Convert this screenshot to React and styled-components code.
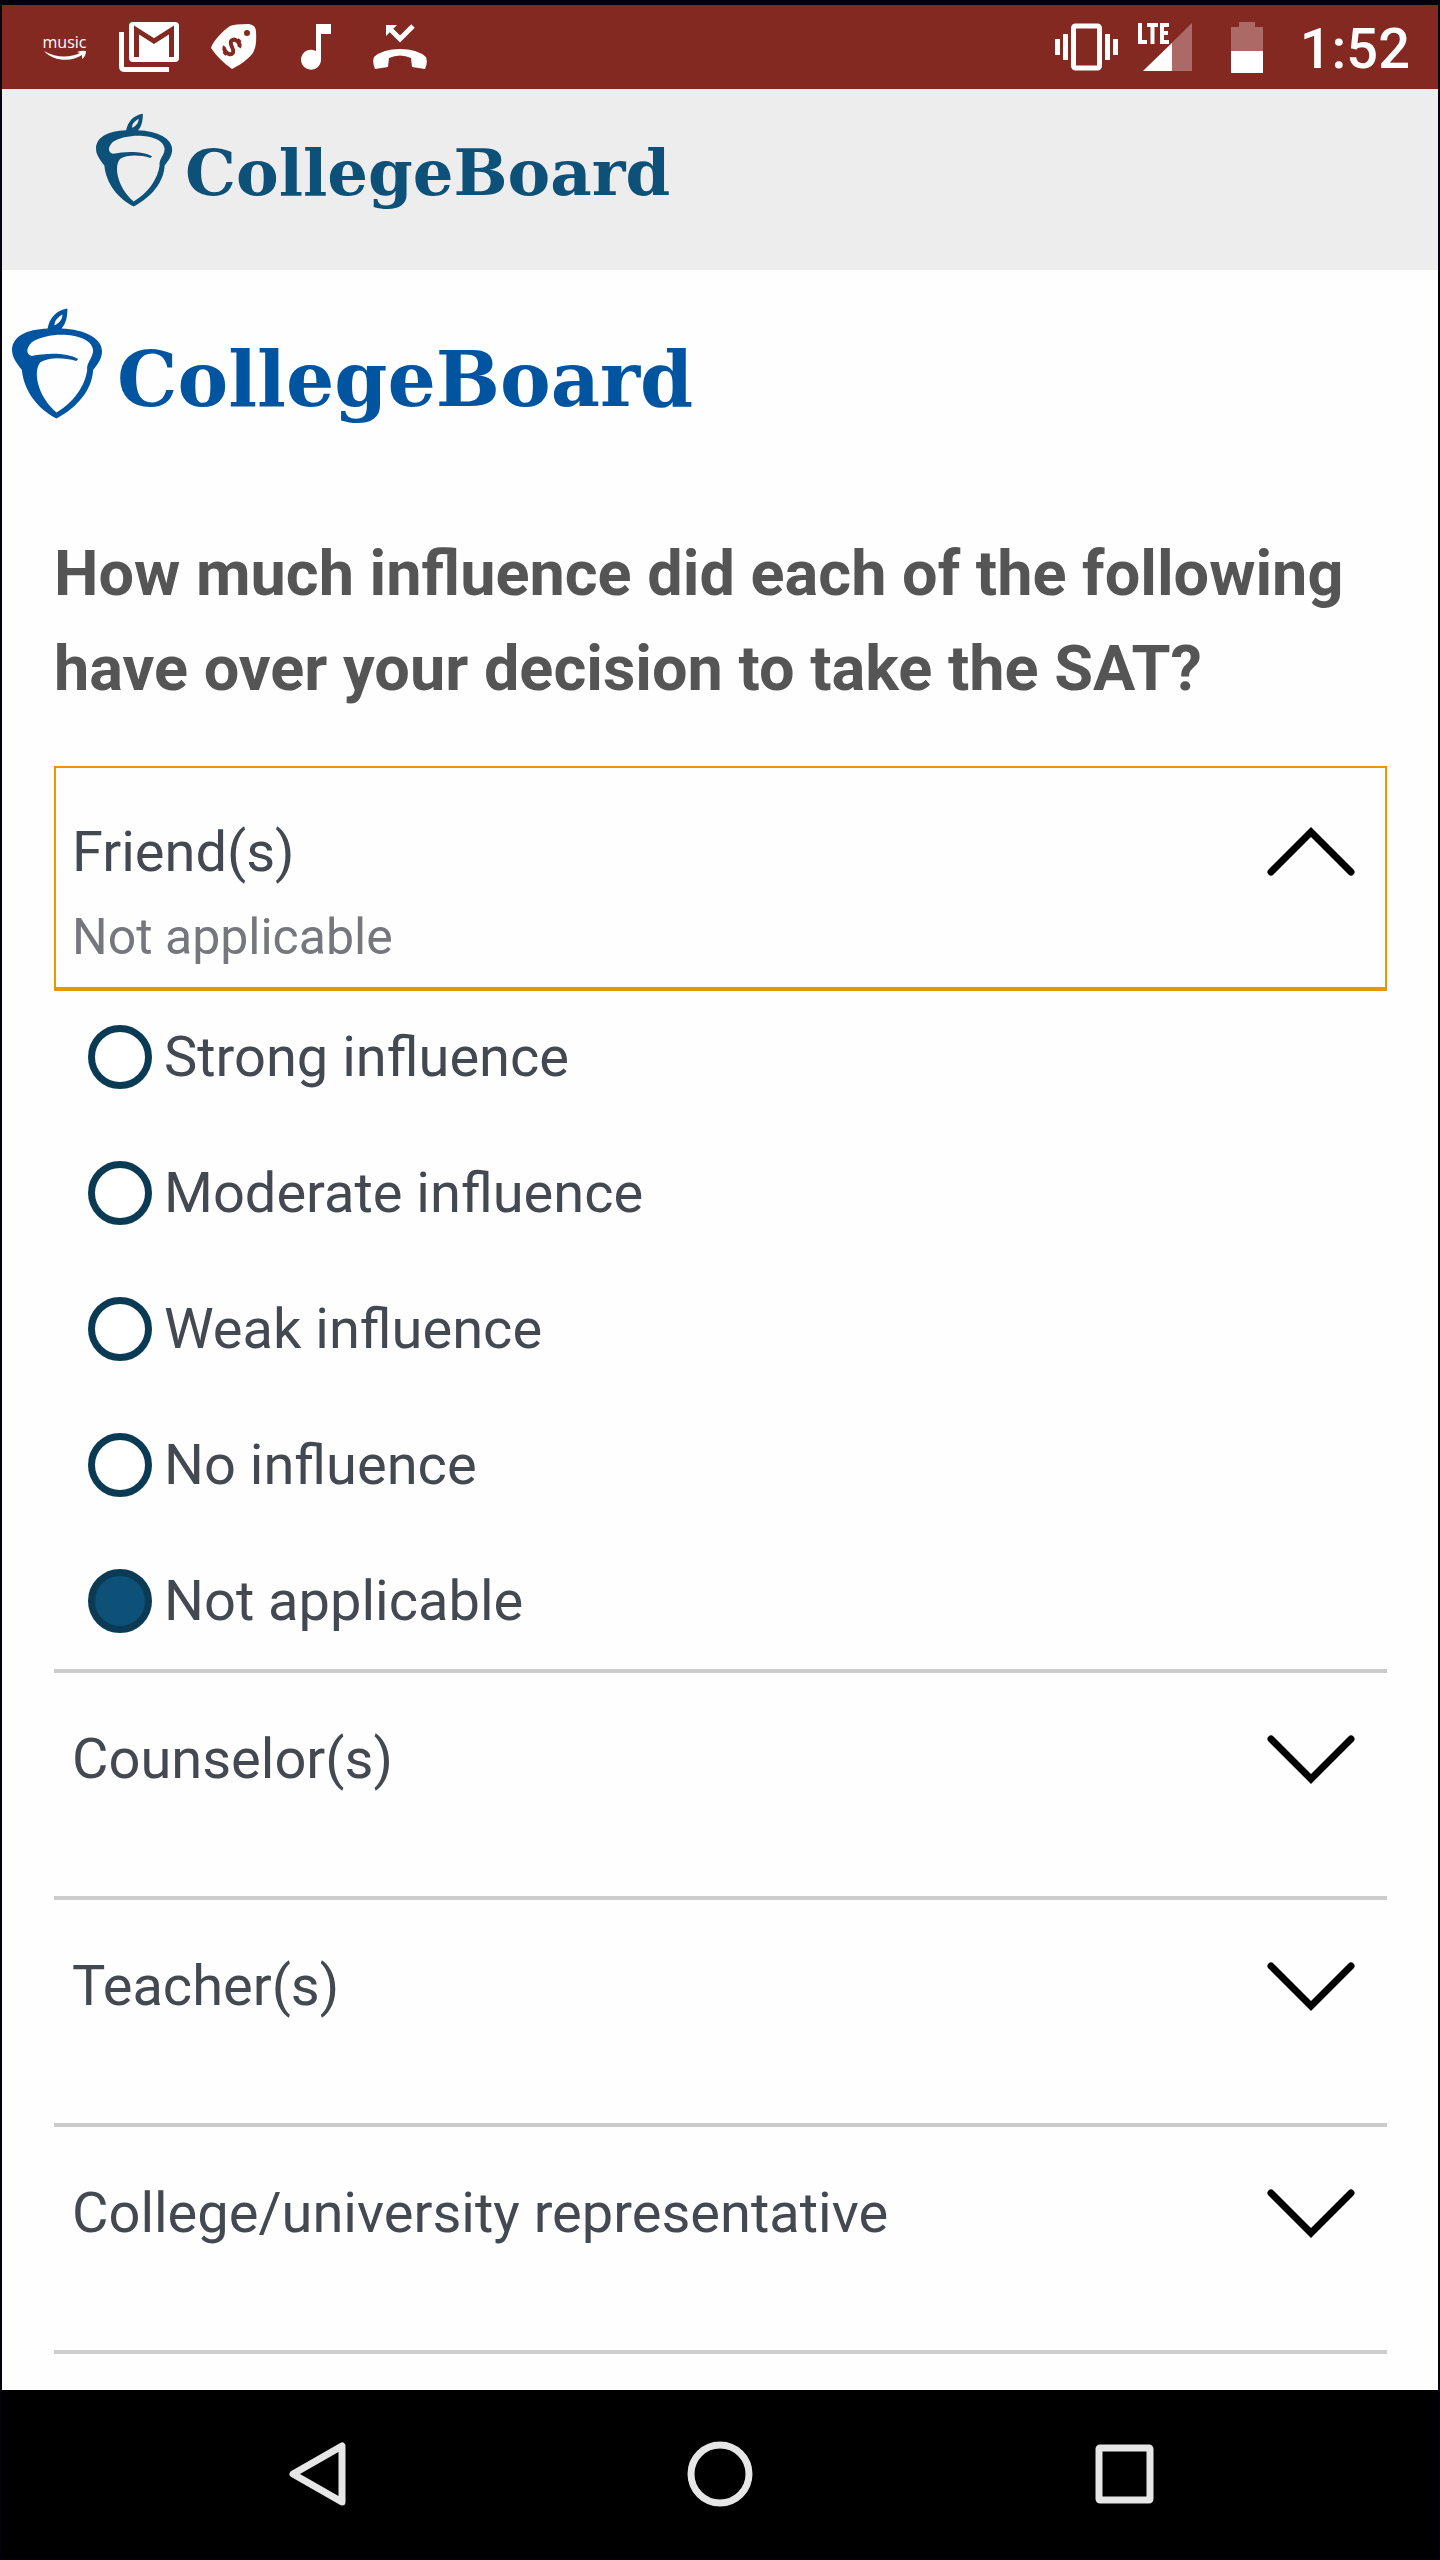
import React, { useState } from "react";
import styled, { createGlobalStyle } from "styled-components";

const GlobalStyle = createGlobalStyle`
  * { box-sizing: border-box; }
  body { margin: 0; background: #05000c; font-family: Roboto, "Liberation Sans", sans-serif; }
  button { font: inherit; color: inherit; background: none; border: 0; padding: 0; cursor: pointer; }
`;

const Screen = styled.div`
  display: flex;
  flex-direction: column;
  min-height: 100vh;
  padding: 5px 2px 2px;
  background: #05000c;
`;

const StatusBar = styled.header`
  display: flex;
  justify-content: space-between;
  height: 84px;
  padding: 0 28px 0 40px;
  background: #832922;
  color: #fff;
`;

const StatusGroup = styled.div`
  display: flex;
  align-items: center;
  gap: ${(p) => p.$gap}px;
`;

const MusicBadge = styled.div`
  display: flex;
  flex-direction: column;
  align-items: center;
  width: 45px;
  font: 16px/16px "Open Sans", sans-serif;
`;

const Clock = styled.time`
  padding: 4px 0 0 16px;
  font-size: 56px;
  line-height: 64px;
  font-weight: 500;
`;

const SiteHeader = styled.div`
  display: flex;
  align-items: flex-start;
  height: 181px;
  padding: 24px 94px;
  background: #ededed;
`;

const SurveyHeader = styled.div`
  padding: 38px 10px 0;
`;

const Brand = styled.a`
  display: flex;
  align-items: flex-start;
  gap: ${(p) => (p.$large ? 14 : 12)}px;
  color: ${(p) => (p.$large ? "#0054a0" : "#0d5078")};
  font-family: "DejaVu Serif", serif;
  font-size: ${(p) => (p.$large ? 76 : 64)}px;
  line-height: ${(p) => (p.$large ? 144 : 120)}px;
  height: ${(p) => (p.$large ? 114 : 96)}px;
  font-weight: 700;
  text-decoration: none;

  svg { flex: none; }
`;

const Page = styled.main`
  flex: 1;
  background: #fefefe;
`;

const Survey = styled.form`
  padding: 104px 51px 36px 52px;
`;

const Question = styled.h1`
  margin: 0 0 50px;
  color: #555;
  font-size: 63px;
  line-height: 95px;
  font-weight: 700;
`;

const Toggle = styled.button`
  display: flex;
  justify-content: space-between;
  align-items: flex-start;
  width: 100%;
  height: ${(p) => (p.$open ? 225 : 223)}px;
  padding: ${(p) => (p.$open ? "48px 30px 0 16px" : "50px 32px 0 18px")};
  border: ${(p) => (p.$open ? "2px solid #e59700" : "0")};
  border-bottom-width: ${(p) => (p.$open ? 4 : 0)}px;
  text-align: left;

  svg { flex: none; margin-top: 11px; }
`;

const Labels = styled.span`
  display: flex;
  flex-direction: column;
`;

const Topic = styled.span`
  color: #444850;
  font-size: 56px;
  line-height: 72px;
`;

const Answer = styled.span`
  color: #76777d;
  font-size: 50px;
  line-height: 98px;
`;

const Section = styled.section`
  border-bottom: 4px solid #ccc;
`;

const Options = styled.fieldset`
  display: flex;
  flex-direction: column;
  gap: 72px;
  margin: 0;
  padding: 34px 34px 36px;
  border: 0;
`;

const Option = styled.label`
  display: flex;
  align-items: center;
  gap: 12px;
  height: 64px;
  color: #444850;
  font-size: 56px;
  line-height: 64px;
`;

const Radio = styled.input.attrs({ type: "radio" })`
  appearance: none;
  width: 64px;
  height: 64px;
  margin: 0;
  border: 7px solid #0b3a55;
  border-radius: 50%;
  background: #fff;
  &:checked { background: #0d5078; }
`;

const NavBar = styled.nav`
  display: grid;
  grid-template-columns: repeat(3, 1fr);
  height: 168px;
  padding: 0 113px;
  background: #000;
`;

const NavButton = styled.button`
  display: grid;
  place-items: center;
`;

const Acorn = ({ width, height }) => (
  <svg width={width} height={height} viewBox="0 0 92 112" aria-hidden="true">
    <path fillRule="evenodd" fill="currentColor" d="M36 20C38 10 44 2 56 0C56 10 54 16 50 20C74 21 91 30 91 43C91 50 87 56 82 62C81 82 66 100 45 111C27 102 12 84 10 62C4 54 0 49 0 41C1 28 14 21 36 20ZM43 17C49 14 51 10 51 6C46 9 43 12 43 17ZM20 34C14 40 14 46 20 48C34 45 55 44 67 51L65 53C52 49 37 49 29 54C21 62 25 88 45 105C62 95 74 78 76 62C75 54 82 50 82 42C80 24 38 22 20 34Z" />
  </svg>
);

const Chevron = ({ up }) => (
  <svg width="88" height="50" viewBox="0 0 88 50" aria-hidden="true">
    <path d={up ? "M4 45L44 5L84 45" : "M4 5L44 45L84 5"} fill="none" stroke="#000" strokeWidth="7" strokeLinecap="round" />
  </svg>
);

const LEVELS = ["Strong influence", "Moderate influence", "Weak influence", "No influence", "Not applicable"];
const TOPICS = ["Friend(s)", "Counselor(s)", "Teacher(s)", "College/university representative"];

export default function App() {
  const [open, setOpen] = useState(0);
  const [answers, setAnswers] = useState({ 0: "Not applicable" });

  return (
    <Screen>
      <GlobalStyle />
      <StatusBar>
        <StatusGroup $gap={32}>
          <MusicBadge>
            music
            <svg width="42" height="11" viewBox="0 0 42 11" fill="#fff">
              <path d="M0 1C12 8 26 8 36 3L33 2Q38 0 42 1Q42 6 38 9V5C28 12 10 12 0 1Z" />
            </svg>
          </MusicBadge>
          <svg width="60" height="50" viewBox="0 0 60 50" fill="none" stroke="#fff">
            <path d="M2.500 10V44.500Q2.500 47.500 6 47.500H50" strokeWidth="5" />
            <rect x="10" width="50" height="40" rx="4" fill="#fff" stroke="none" />
            <path d="M17.500 35V8L35 19L52.500 8V35" stroke="#832922" strokeWidth="5" />
          </svg>
          <svg width="46" height="46" viewBox="0 0 46 46">
            <path fill="#fff" d="M0 24Q1 20 6 14Q14 5 19 2Q23 0 38 0Q45 1 45 8Q46 22 42 29Q35 38 21 45Q8 36 0 24Z" />
            <circle cx="36" cy="9" r="3" fill="#832922" />
            <path d="M5 -5C4 -9 -5 -9 -5 -4C-5 1 5 -1 5 4C5 9 -5 9 -5 5M0 -11V-7M0 7V11" transform="translate(21 23) rotate(48)" fill="none" stroke="#832922" strokeWidth="4" />
          </svg>
          <svg width="52" height="46" viewBox="0 0 52 46" fill="#fff">
            <path d="M27 0H42V10H32V35A10 10 0 1 1 27 27Z" />
          </svg>
          <svg width="54" height="46" viewBox="0 0 54 46">
            <path d="M15 3L27 15L40 2" fill="none" stroke="#fff" strokeWidth="5" />
            <path fill="#fff" d="M13 1H24L13 12ZM2 45Q-1 38 1 33Q10 25 27 25Q44 25 53 33Q55 39 52 45L39 43L38 34Q27 29 16 34L15 43Z" />
          </svg>
        </StatusGroup>
        <StatusGroup $gap={19}>
          <svg width="64" height="48" viewBox="0 0 64 48" fill="#fff">
            <path d="M0 16H5V32H0ZM8 11H13V37H8ZM50 11H55V37H50ZM58 16H63V32H58Z" />
            <rect x="18.500" y="3" width="26" height="42" rx="2" fill="none" stroke="#fff" strokeWidth="5" />
          </svg>
          <svg width="54" height="50" viewBox="0 0 54 50">
            <path d="M54 1V49H5Z" fill="#ab6a66" />
            <path d="M34 21V49H5Z" fill="#fff" />
            <path d="M0 0H33V15L28 22H0Z" fill="#832922" />
            <path d="M2 1V20H9M9 3H20M14.500 3V22M31 3H24V20H31M24 11H30" fill="none" stroke="#fff" strokeWidth="4" />
          </svg>
          <svg width="54" height="52" viewBox="0 0 54 52">
            <path d="M28 1H44V6H52V30H20V6H28Z" fill="#ab6a66" />
            <path d="M20 30H52V52H20Z" fill="#fff" />
          </svg>
          <Clock>1:52</Clock>
        </StatusGroup>
      </StatusBar>
      <SiteHeader>
        <Brand href="#home">
          <Acorn width={77} height={95} />
          CollegeBoard
        </Brand>
      </SiteHeader>
      <Page>
        <SurveyHeader>
          <Brand href="#survey" $large>
            <Acorn width={91} height={112} />
            CollegeBoard
          </Brand>
        </SurveyHeader>
        <Survey>
          <Question>How much influence did each of the following have over your decision to take the SAT?</Question>
          {TOPICS.map((topic, i) => (
            <Section key={topic}>
              <Toggle type="button" $open={open === i} aria-expanded={open === i} onClick={() => setOpen(open === i ? -1 : i)}>
                <Labels>
                  <Topic>{topic}</Topic>
                  {answers[i] && <Answer>{answers[i]}</Answer>}
                </Labels>
                <Chevron up={open === i} />
              </Toggle>
              {open === i && (
                <Options aria-label={topic}>
                  {LEVELS.map((level) => (
                    <Option key={level}>
                      <Radio name={`topic-${i}`} checked={answers[i] === level} onChange={() => setAnswers({ ...answers, [i]: level })} />
                      {level}
                    </Option>
                  ))}
                </Options>
              )}
            </Section>
          ))}
        </Survey>
      </Page>
      <NavBar>
        <NavButton aria-label="Back">
          <svg width="66" height="66" viewBox="0 0 66 66" fill="none" stroke="#e6e6e6" strokeWidth="7" strokeLinejoin="round">
            <path d="M58 5V61L9 33Z" />
          </svg>
        </NavButton>
        <NavButton aria-label="Home">
          <svg width="66" height="66" viewBox="0 0 66 66" fill="none" stroke="#e6e6e6" strokeWidth="7">
            <circle cx="33" cy="33" r="29" />
          </svg>
        </NavButton>
        <NavButton aria-label="Recent apps">
          <svg width="66" height="66" viewBox="0 0 66 66" fill="none" stroke="#e6e6e6" strokeWidth="7">
            <rect x="9" y="7" width="51" height="52" rx="1" />
          </svg>
        </NavButton>
      </NavBar>
    </Screen>
  );
}
